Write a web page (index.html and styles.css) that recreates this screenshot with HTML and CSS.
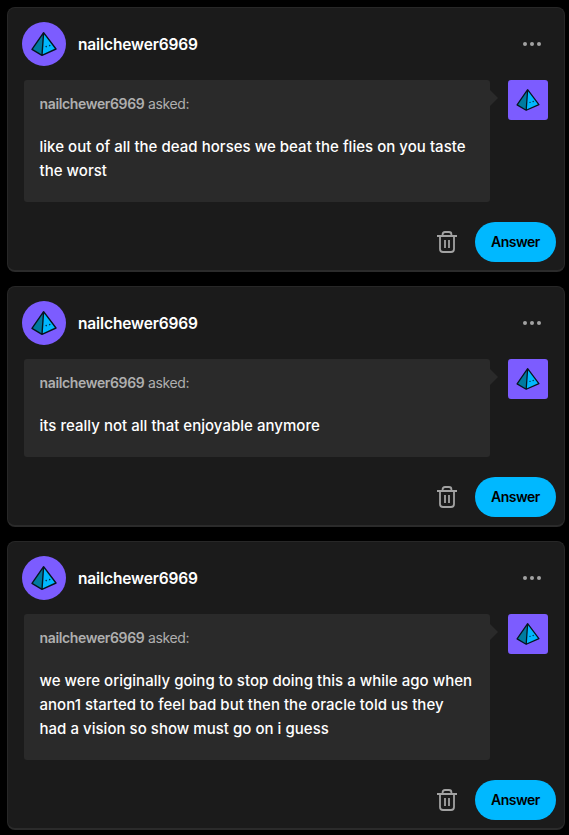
FILE: index.html
```html
<!DOCTYPE html>
<html lang="en">
<head>
    <meta charset="UTF-8">
    <meta name="viewport" content="width=device-width, initial-scale=1.0">
    <title>Inbox</title>
    <link rel="stylesheet" href="styles.css">
</head>
<body>
    <!-- Shared icons -->
    <svg class="sprite">
        <symbol id="pyramid" viewBox="0 0 44 44">
            <path d="M21.6 10.7 10 27.4 20 33.3Z" fill="#007b9f"/>
            <path d="M21.6 10.7 20 33.3 34 27Z" fill="#00b8ff"/>
            <path d="M21.6 10.7 10 27.4 20 33.3 34 27ZL20 33.3" fill="none" stroke="#06151f" stroke-width="1.4" stroke-linejoin="round"/>
            <circle cx="24.2" cy="24.6" r=".8" fill="#06334d"/>
            <circle cx="27.7" cy="23.6" r=".8" fill="#06334d"/>
        </symbol>
        <symbol id="dots" viewBox="0 0 18 4">
            <circle cx="2" cy="2" r="2"/>
            <circle cx="9" cy="2" r="2"/>
            <circle cx="16" cy="2" r="2"/>
        </symbol>
        <symbol id="trash" viewBox="0 0 20 22">
            <path d="M0 5h20M5.6 5V3.4Q5.6 1 8 1h4q2.4 0 2.4 2.4V5M3 5v13q0 3 3 3h8q3 0 3-3V5M8 9v8M12 9v8" fill="none" stroke="currentColor" stroke-width="1.8"/>
        </symbol>
    </svg>

    <div class="inbox">
        <div class="card">
            <div class="card-header">
                <svg class="avatar"><use href="#pyramid"/></svg>
                <span class="username">nailchewer6969</span>
                <svg class="dots"><use href="#dots"/></svg>
            </div>
            <div class="ask">
                <div class="bubble">
                    <p class="asker"><b>nailchewer6969</b> asked:</p>
                    <p class="question">like out of all the dead horses we beat the flies on you taste<br>the worst</p>
                </div>
                <svg class="asker-avatar"><use href="#pyramid"/></svg>
            </div>
            <div class="card-footer">
                <svg class="trash"><use href="#trash"/></svg>
                <button class="answer">Answer</button>
            </div>
        </div>

        <div class="card">
            <div class="card-header">
                <svg class="avatar"><use href="#pyramid"/></svg>
                <span class="username">nailchewer6969</span>
                <svg class="dots"><use href="#dots"/></svg>
            </div>
            <div class="ask">
                <div class="bubble">
                    <p class="asker"><b>nailchewer6969</b> asked:</p>
                    <p class="question">its really not all that enjoyable anymore</p>
                </div>
                <svg class="asker-avatar"><use href="#pyramid"/></svg>
            </div>
            <div class="card-footer">
                <svg class="trash"><use href="#trash"/></svg>
                <button class="answer">Answer</button>
            </div>
        </div>

        <div class="card">
            <div class="card-header">
                <svg class="avatar"><use href="#pyramid"/></svg>
                <span class="username">nailchewer6969</span>
                <svg class="dots"><use href="#dots"/></svg>
            </div>
            <div class="ask">
                <div class="bubble">
                    <p class="asker"><b>nailchewer6969</b> asked:</p>
                    <p class="question">we were originally going to stop doing this a while ago when<br>anon1 started to feel bad but then the oracle told us they<br>had a vision so show must go on i guess</p>
                </div>
                <svg class="asker-avatar"><use href="#pyramid"/></svg>
            </div>
            <div class="card-footer">
                <svg class="trash"><use href="#trash"/></svg>
                <button class="answer">Answer</button>
            </div>
        </div>
    </div>
</body>
</html>
```

FILE: styles.css
```css
* {
    box-sizing: border-box;
}

body {
    margin: 0;
    background-color: #000;
    color: #fff;
    font-family: Inter, "Liberation Sans", sans-serif;
    overflow: hidden;
}

.sprite {
    display: block;
    width: 0;
    height: 0;
}

.inbox {
    display: flex;
    flex-direction: column;
    gap: 14px;
    padding: 7px 4px 0 7px;
}

.card {
    padding: 14px 8px 8px 14px;
    background-color: #1b1b1b;
    border: 1px solid #272727;
    border-bottom: 2px solid #2b2b2b;
    border-radius: 8px;
}

/* Header */
.card-header {
    display: flex;
    align-items: center;
    height: 44px;
}

.avatar {
    width: 44px;
    height: 44px;
    margin-right: 12px;
    border-radius: 50%;
    background-color: #7c5cff;
}

.username {
    font-size: 15.5px;
    font-weight: 600;
    letter-spacing: -0.13px;
    white-space: nowrap;
}

.dots {
    width: 18px;
    height: 4px;
    margin-left: auto;
    margin-right: 15px;
    fill: #a2a2a2;
}

/* Question */
.ask {
    display: flex;
    align-items: flex-start;
    gap: 18px;
    margin: 14px 0 20px 2px;
}

.bubble {
    position: relative;
    width: 466px;
    padding: 12px 0 19px 15.5px;
    border-radius: 3px;
    background-color: #2a2a2a;
    white-space: nowrap;
}

/* Arrow pointing at the asker */
.bubble::after {
    content: "";
    position: absolute;
    top: 10px;
    right: -8px;
    border: 8px solid transparent;
    border-right: 0;
    border-left-color: #2a2a2a;
}

.asker {
    margin: 0 0 19px;
    font-size: 14px;
    line-height: 24px;
    letter-spacing: -0.36px;
    color: #afafaf;
}

.asker b {
    font-weight: 600;
}

.question {
    margin: 0;
    font-size: 15px;
    font-weight: 500;
    line-height: 24px;
    letter-spacing: 0.03px;
}

.asker-avatar {
    width: 40px;
    height: 40px;
    border-radius: 3px;
    background-color: #7c5cff;
}

/* Actions */
.card-footer {
    display: flex;
    align-items: center;
    justify-content: flex-end;
    gap: 18px;
    height: 40px;
}

.trash {
    width: 20px;
    height: 22px;
    color: #a2a2a2;
}

.answer {
    width: 81px;
    height: 40px;
    padding: 0 0 1px;
    border: 0;
    border-radius: 20px;
    background-color: #00b8ff;
    color: #000;
    font-family: inherit;
    font-size: 14px;
    font-weight: 600;
    letter-spacing: -0.5px;
}
```
